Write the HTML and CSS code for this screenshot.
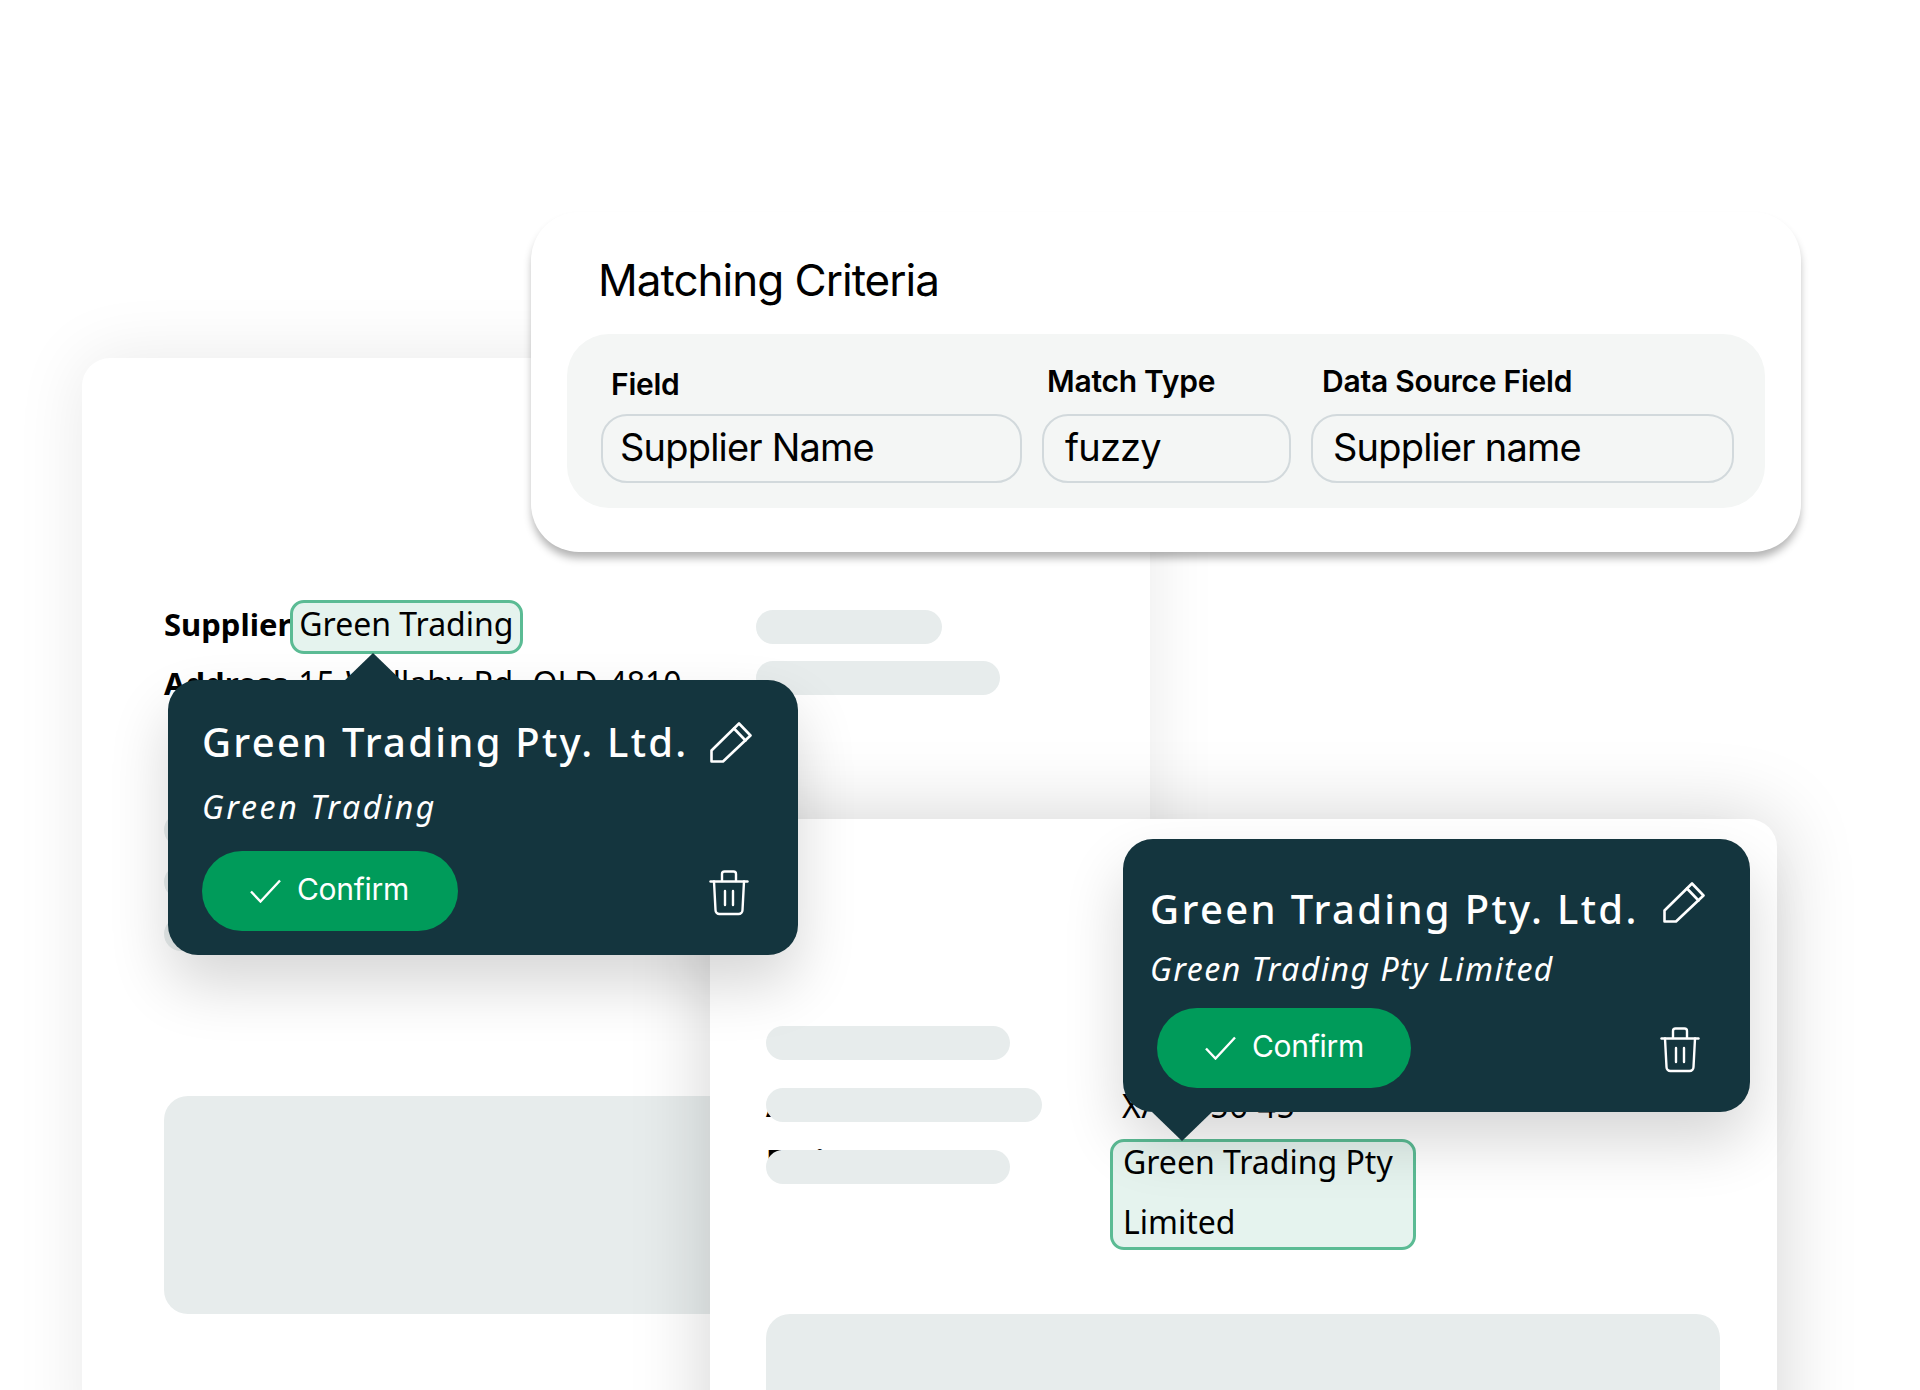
FILE: index.html
```html
<!DOCTYPE html>
<html lang="en">
<head>
<meta charset="utf-8">
<title>Matching Criteria</title>
<link rel="stylesheet" href="styles.css">
</head>
<body>
<main class="scene">
  <section class="doc doc-back">
    <div class="doc-back-top">
      <div class="fields">
        <div class="line line-supplier"><strong>Supplier</strong><span class="chip chip-inline">Green Trading</span></div>
        <div class="line line-address"><strong>Address</strong> 15 Wallaby Rd, QLD 4810</div>
      </div>
      <div class="skels skels-right">
        <div class="skel skel-w186"></div>
        <div class="skel skel-w244"></div>
      </div>
    </div>
    <div class="skels skels-left">
      <div class="skel skel-w186"></div>
      <div class="skel skel-w186"></div>
      <div class="skel skel-w186"></div>
    </div>
    <div class="block block-back"></div>
  </section>

  <section class="doc doc-front">
    <div class="front-grid">
      <div class="front-labels">
        <div class="skel skel-w244"></div>
        <div class="masked"><strong>ABN</strong><div class="skel skel-cover skel-w276"></div></div>
        <div class="masked masked-name"><strong>Entity Name</strong><div class="skel skel-cover skel-w244"></div></div>
      </div>
      <div class="front-values">
        <div class="value-id">XA 1456 45</div>
        <div class="chip chip-block"><span class="chip-text">Green Trading Pty Limited</span></div>
      </div>
    </div>
    <div class="block block-front"></div>
  </section>

  <section class="criteria">
    <h1 class="criteria-title">Matching Criteria</h1>
    <div class="criteria-panel">
      <div class="col col-field">
        <div class="col-label col-label-low">Field</div>
        <div class="input">Supplier Name</div>
      </div>
      <div class="col col-type">
        <div class="col-label">Match Type</div>
        <div class="input input-type">fuzzy</div>
      </div>
      <div class="col col-source">
        <div class="col-label col-label-source">Data Source Field</div>
        <div class="input input-source">Supplier name</div>
      </div>
    </div>
  </section>

  <aside class="pop pop-a">
    <div class="pop-head">
      <div class="pop-title">Green Trading Pty. Ltd.</div>
      <svg class="ico-pencil" viewBox="0 0 42 42" fill="none" stroke="#fff" stroke-width="2.6" stroke-linejoin="round" stroke-linecap="round"><path d="M1.5 28.5V39.5H13L40.5 13.5L29 1.5Z"/><path d="M24 6.5L35.5 18.5"/></svg>
    </div>
    <div class="pop-sub">Green Trading</div>
    <div class="pop-actions">
      <button class="btn"><svg class="ico-check" viewBox="0 0 32 24" fill="none" stroke="#fff" stroke-width="2.4"><path d="M1 12.5L10.5 22.5L30 1.5"/></svg><span>Confirm</span></button>
      <svg class="ico-trash" viewBox="0 0 40 46" fill="none" stroke="#fff" stroke-width="2.4" stroke-linejoin="round" stroke-linecap="round"><path d="M1.5 11.5H38.5"/><path d="M13 11V4a2.5 2.5 0 0 1 2.5-2.5h9A2.5 2.5 0 0 1 27 4V11"/><path d="M5 11.5L6.5 40a4 4 0 0 0 4 4h19a4 4 0 0 0 4-4L35 11.5"/><path d="M16 21V35M24 21V35"/></svg>
    </div>
  </aside>

  <aside class="pop pop-b">
    <div class="pop-head">
      <div class="pop-title">Green Trading Pty. Ltd.</div>
      <svg class="ico-pencil" viewBox="0 0 42 42" fill="none" stroke="#fff" stroke-width="2.6" stroke-linejoin="round" stroke-linecap="round"><path d="M1.5 28.5V39.5H13L40.5 13.5L29 1.5Z"/><path d="M24 6.5L35.5 18.5"/></svg>
    </div>
    <div class="pop-sub">Green Trading Pty Limited</div>
    <div class="pop-actions">
      <button class="btn"><svg class="ico-check" viewBox="0 0 32 24" fill="none" stroke="#fff" stroke-width="2.4"><path d="M1 12.5L10.5 22.5L30 1.5"/></svg><span>Confirm</span></button>
      <svg class="ico-trash" viewBox="0 0 40 46" fill="none" stroke="#fff" stroke-width="2.4" stroke-linejoin="round" stroke-linecap="round"><path d="M1.5 11.5H38.5"/><path d="M13 11V4a2.5 2.5 0 0 1 2.5-2.5h9A2.5 2.5 0 0 1 27 4V11"/><path d="M5 11.5L6.5 40a4 4 0 0 0 4 4h19a4 4 0 0 0 4-4L35 11.5"/><path d="M16 21V35M24 21V35"/></svg>
    </div>
  </aside>
</main>
</body>
</html>
```

FILE: styles.css
```css
* { box-sizing: border-box; }
html, body { margin: 0; padding: 0; background: #fff; }
body { font-family: "Noto Sans", "Open Sans", sans-serif; color: #000; }

.scene { position: relative; width: 1920px; height: 1390px; overflow: hidden; background: #fff; }

/* documents: free-floating sheets on the canvas */
.doc { position: absolute; background: #fff; border-radius: 28px 28px 0 0; font-size: 32px; }
.doc-back { left: 82px; top: 358px; width: 1068px; height: 1100px; padding: 242px 0 0 82px; box-shadow: 0 0 70px rgba(0,0,0,.09); }
.doc-front { left: 710px; top: 819px; width: 1067px; height: 700px; padding: 207px 0 0 56px; box-shadow: 0 0 80px rgba(0,0,0,.18); }

.skel { height: 34px; border-radius: 17px; background: #e7ecec; }
.skel-w186 { width: 186px; }
.skel-w244 { width: 244px; }
.skel-w276 { width: 276px; }

.doc-back-top { display: flex; }
.fields { width: 592px; }
.line { white-space: nowrap; }
.line strong { font-size: 31px; }
.line-supplier { display: flex; align-items: center; height: 54px; }
.line-supplier strong { margin-top: -6px; }
.line-address { margin-top: 4px; line-height: 50px; word-spacing: 2.5px; }
.chip { background: #e5f3ee; border: 3px solid #5bbb94; border-radius: 14px; }
.chip-inline { margin-left: -1px; height: 54px; padding: 0 7px 0 6px; line-height: 42px; }
.skels-right { display: flex; flex-direction: column; gap: 17px; padding-top: 10px; }
.skels-left { display: flex; flex-direction: column; gap: 18px; margin-top: 105px; }
.block { height: 218px; background: #e7ecec; border-radius: 24px; }
.block-back { width: 700px; margin-top: 145px; }
.block-front { width: 954px; height: 300px; margin-top: 65px; }

.front-grid { display: flex; height: 223px; }
.front-labels { width: 356px; display: flex; flex-direction: column; gap: 28px; }
.masked { position: relative; height: 34px; line-height: 34px; white-space: nowrap; }
.masked strong { font-size: 30px; }
.masked-name { line-height: 20px; }
.skel-cover { position: absolute; left: 0; top: 0; }
.front-values { padding-top: 50px; }
.value-id { height: 56px; line-height: 60px; letter-spacing: .8px; white-space: nowrap; }
.chip-block { width: 306px; height: 111px; margin: 7px 0 0 -12px; padding: 0 10px; line-height: 60px; }
.chip-text { display: block; margin-top: -10px; }

/* criteria card */
.criteria { position: absolute; left: 531px; top: 212px; width: 1270px; height: 340px; background: #fff; border-radius: 48px; padding: 43px 36px 0; box-shadow: 0 7px 8px -1px rgba(0,0,0,.3); font-family: Inter, "Liberation Sans", sans-serif; }
.criteria-title { margin: 0 0 0 31px; font-size: 44px; line-height: 50px; font-weight: 400; letter-spacing: -1px; }
.criteria-panel { display: flex; gap: 20px; height: 174px; margin-top: 29px; padding: 24px 31px 0 34px; background: #f4f6f5; border-radius: 42px; }
.col { flex: none; }
.col-field { width: 421px; }
.col-type { width: 249px; }
.col-source { width: 423px; }
.col-label { height: 56px; padding: 0 0 0 5px; font-size: 30px; line-height: 46px; font-weight: 600; letter-spacing: -.25px; white-space: nowrap; }
.col-label-low { padding: 3px 0 0 10px; }
.col-label-source { padding-left: 11px; }
.input { height: 69px; padding-left: 17px; border: 2px solid #d2d9dc; border-radius: 26px; font-size: 38px; line-height: 62px; letter-spacing: -.8px; white-space: nowrap; }
.input-type { padding-left: 21px; }
.input-source { padding-left: 20px; }

/* popovers */
.pop { position: absolute; background: #14353e; border-radius: 30px; color: #fff; box-shadow: 0 30px 60px rgba(0,0,0,.16); }
.pop::before { content: ""; position: absolute; width: 60px; height: 29px; background: #14353e; }
.pop-a { left: 168px; top: 680px; width: 630px; height: 275px; padding: 34px 0 0 34px; }
.pop-a::before { left: 175px; top: -27px; clip-path: polygon(50% 0, 100% 100%, 0 100%); }
.pop-b { left: 1123px; top: 839px; width: 627px; height: 273px; padding: 42px 0 0 27px; }
.pop-b::before { left: 29px; bottom: -29px; clip-path: polygon(0 0, 100% 0, 50% 100%); }

.pop-head { display: flex; align-items: center; height: 56px; }
.pop-title { font-size: 40px; font-weight: 500; letter-spacing: 2.24px; line-height: 56px; white-space: nowrap; }
.pop-b .pop-title { letter-spacing: 2.34px; }
.ico-pencil { flex: none; width: 42px; height: 42px; margin: 2px 0 0 22px; }
.pop-sub { font-size: 32px; font-style: italic; line-height: 44px; white-space: nowrap; }
.pop-a .pop-sub { margin-top: 15px; letter-spacing: 2.6px; }
.pop-b .pop-sub { margin-top: 10px; letter-spacing: 1.5px; }
.pop-b .ico-pencil { margin: -12px 0 0 24px; }
.pop-actions { display: flex; align-items: center; justify-content: space-between; width: 547px; }
.pop-a .pop-actions { margin-top: 22px; }
.pop-b .pop-actions { margin: 17px 0 0 7px; width: 543px; }
.pop-b .btn { width: 254px; }
.btn { display: flex; align-items: center; gap: 15px; height: 80px; width: 256px; padding: 0 0 0 48px; border: 0; border-radius: 40px; background: #009b5a; color: #fff; font-family: Inter, "Liberation Sans", sans-serif; font-size: 30px; letter-spacing: -.3px; }
.btn span { margin-top: -4px; }
.ico-check { flex: none; width: 32px; height: 24px; }
.ico-trash { flex: none; width: 40px; height: 46px; margin-top: 4px; }
```
